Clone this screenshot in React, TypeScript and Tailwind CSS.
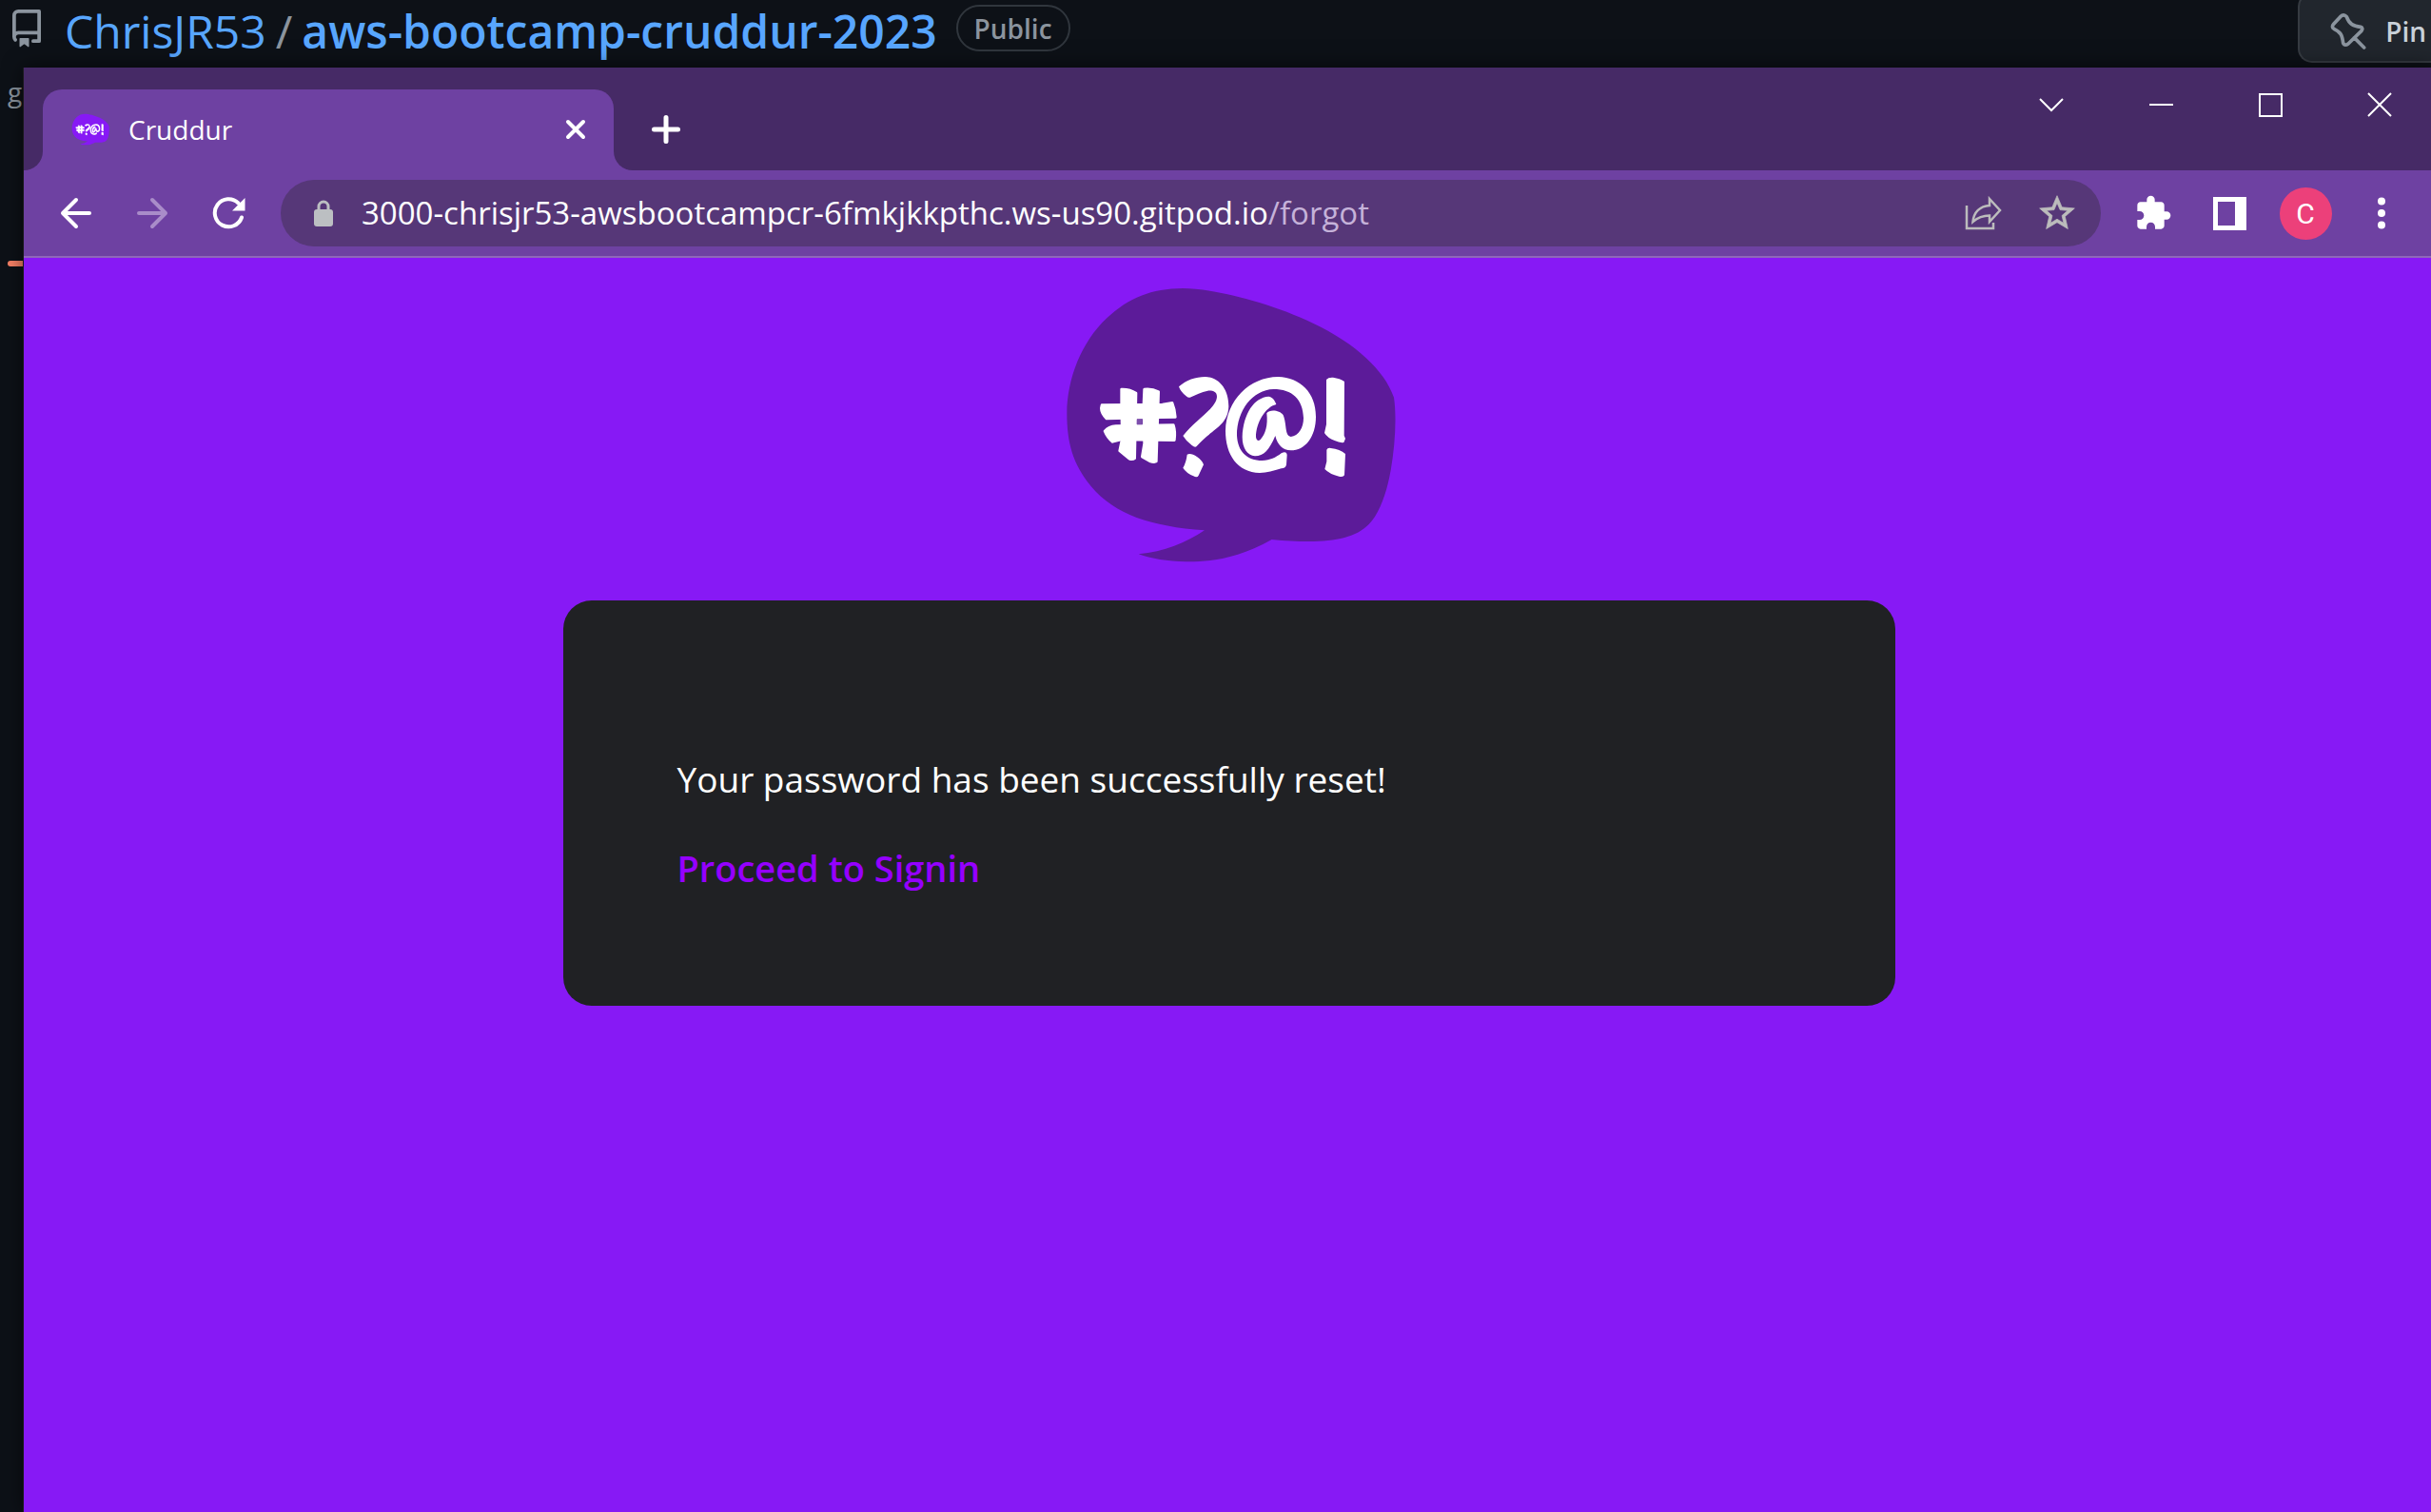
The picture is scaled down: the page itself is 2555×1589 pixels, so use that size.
import { MdExtension } from "react-icons/md";

const HOST = "3000-chrisjr53-awsbootcampcr-6fmkjkkpthc.ws-us90.gitpod.io";

function CruddurMark({ className, bubble, eye }: { className: string; bubble: string; eye: string }) {
  return (
    <svg className={className} viewBox="48 60 1056 876" role="img" aria-label="Cruddur">
      <path
        fill={bubble}
        d="M430 66C520 66 700 108 840 176C975 240 1066 325 1095 410C1104 470 1099 560 1085 640C1072 712 1050 775 1016 810C962 865 860 872 710 858C600 920 510 929 440 928C380 927 330 918 290 904C370 897 440 868 498 829C330 817 215 780 140 690C84 622 64 555 64 460C65 350 110 235 190 160C260 95 330 67 430 66Z"
      />
      <g fill="#fff" stroke="#fff" strokeWidth="8" strokeLinejoin="round">
        <path d="M236 384Q262 383 282 396L278 602Q270 608 260 603L230 578L238 540L236 430Z" />
        <path d="M308 384Q332 381 353 392L346 612Q340 616 325 611L301 597L308 555L306 430Z" />
        <path d="M174 434L365 432L396 427Q404 446 406 472L350 473L189 477Q172 460 172 444Z" />
        <path d="M183 516Q196 501 218 500L400 497Q407 518 403 545L235 543L208 550Q192 538 183 516Z" />
      </g>
      <path fill={eye} d="M285 478h17v18h-17Z" />
      <g fill="#fff">
        <path d="M417 376C440 355 470 345 500 345C545 347 574 385 574 438C572 500 520 510 473 564Q468 569 458 561Q440 548 430 531C470 480 535 445 537 408C537 392 525 388 508 389C488 392 470 402 452 410Q447 412 440 406Q422 392 417 376Z" />
        <path d="M443 590Q455 584 475 598Q490 608 495 622L479 656Q475 664 463 658Q440 648 430 632Q440 615 443 590Z" />
        <path d="M740 586Q757 578 758 592L756 622Q754 634 740 634C715 642 695 648 672 648C600 645 564 590 564 515C566 420 640 345 730 345C800 347 849 395 849 470C849 535 815 577 770 577C745 576 728 560 721 531C702 575 685 595 657 595C633 593 617 570 617 535C620 460 655 410 700 407C712 408 720 420 724 432C690 440 660 490 660 535C662 547 668 548 674 543C690 525 698 500 694 460C703 447 735 450 746 466C758 495 750 530 770 534C795 532 810 505 810 475C808 415 775 384 715 384C650 386 600 450 600 530C603 580 630 608 680 609C705 608 722 600 740 586Z" />
        <path d="M882 354Q888 346 903 347Q925 350 939 360L938 530L942 540L937 552Q925 554 908 546Q885 537 876 522L882 495Z" />
        <path d="M883 575Q886 568 896 570Q925 573 942 588L939 655Q936 662 922 659Q892 652 877 636L883 612Z" />
      </g>
    </svg>
  );
}

function RepoIcon() {
  return (
    <svg className="mt-[10px] size-10 shrink-0" viewBox="0 0 16 16" fill="currentColor" aria-hidden="true">
      <path d="M2 2.5A2.5 2.5 0 0 1 4.5 0h8.75a.75.75 0 0 1 .75.75v12.500a.75.75 0 0 1-.75.75h-2.500a.75.75 0 0 1 0-1.500h1.750v-2h-8a1 1 0 0 0-.714 1.700.75.75 0 1 1-1.072 1.050A2.495 2.495 0 0 1 2 11.500Zm10.500-1h-8a1 1 0 0 0-1 1v6.708A2.486 2.486 0 0 1 4.500 9h8ZM5 12.250a.25.25 0 0 1 .25-.25h3.500a.25.25 0 0 1 .25.25v3.250a.25.25 0 0 1-.4.2l-1.450-1.087a.249.249 0 0 0-.3 0L5.400 15.700a.25.25 0 0 1-.4-.2Z" />
    </svg>
  );
}

function PinIcon() {
  return (
    <svg
      className="size-10 text-[#8b949e]"
      viewBox="0 0 120 120"
      fill="none"
      stroke="currentColor"
      strokeWidth="11"
      strokeLinecap="round"
      strokeLinejoin="round"
      aria-hidden="true"
    >
      <path d="M38 14Q49 3 58 14C66 38 80 43 102 46Q111 49 105 58L63 99Q52 107 47 97C44 72 40 62 18 52Q9 46 17 37ZM82 80L113 111" />
    </svg>
  );
}

function RepositoryHeader() {
  return (
    <header className="flex h-[71px] items-start overflow-hidden bg-[#0d1117] pl-2 text-[#8b949e]">
      <RepoIcon />
      <h1 className="ml-5 flex text-[48px] leading-[66px] whitespace-nowrap text-[#58a6ff]">
        <a href="#owner">ChrisJR53</a>
        <span className="mx-[10px] text-[#8b949e]">/</span>
        <a href="#repository" className="font-semibold">aws-bootcamp-cruddur-2023</a>
      </h1>
      <span className="mt-[5px] ml-5 flex h-[49px] items-center rounded-full border-2 border-[#30363d] px-[17px] text-[28px] font-semibold">
        Public
      </span>
      <button className="-mt-2 ml-auto flex h-[74px] shrink-0 items-center gap-5 rounded-[15px] rounded-r-none border-2 border-r-0 border-[#363b42] bg-[#21262d] pt-2 pr-[5px] pl-[30px] text-[28px] font-semibold text-[#c9d1d9]">
        <PinIcon />
        Pin
      </button>
    </header>
  );
}

function TabStrip() {
  return (
    <div className="flex h-[108px] items-end bg-[#462a66]">
      <div className="size-5 bg-[#6e41a2]">
        <div className="size-5 rounded-br-[20px] bg-[#462a66]" />
      </div>
      <div className="flex h-[85px] w-[600px] items-center rounded-t-[20px] bg-[#6e41a2] pr-7 pb-[2px] pl-[30px]">
        <CruddurMark className="h-9 w-10" bubble="#8719f5" eye="#8719f5" />
        <span className="ml-5 text-[28px] text-white">Cruddur</span>
        <button aria-label="Close tab" className="ml-auto">
          <svg className="size-6" viewBox="0 0 24 24" stroke="#fff" strokeWidth="4" strokeLinecap="round">
            <path d="M4 4L20 20M20 4L4 20" />
          </svg>
        </button>
      </div>
      <div className="size-5 bg-[#6e41a2]">
        <div className="size-5 rounded-bl-[20px] bg-[#462a66]" />
      </div>
      <button aria-label="New tab" className="mb-7 ml-5">
        <svg className="size-[30px]" viewBox="0 0 30 30" stroke="#fff" strokeWidth="5" strokeLinecap="round">
          <path d="M15 2.5V27.5M2.5 15H27.5" />
        </svg>
      </button>
      <div className="ml-auto flex self-start">
        {[
          ["Search tabs", "M1 7L13 19L25 7"],
          ["Minimize", "M1 13H26"],
          ["Maximize", "M2 2H25V25H2Z"],
          ["Close", "M1 1L25 25M25 1L1 25"],
        ].map(([label, d]) => (
          <button key={label} aria-label={label} className="flex h-[78px] w-[115px] items-center justify-center">
            <svg className="size-[26px]" viewBox="0 0 26 26" fill="none" stroke="#fff" strokeWidth="2">
              <path d={d} />
            </svg>
          </button>
        ))}
      </div>
    </div>
  );
}

function Toolbar() {
  const cell = "flex h-[70px] w-20 items-center justify-center";
  return (
    <div className="flex h-[92px] items-center border-b-2 border-[#8f67b9] bg-[#6e41a2] pr-[15px] pl-[15px] text-white">
      <button aria-label="Back" className={cell}>
        <svg className="size-10" viewBox="0 0 40 40" fill="none" stroke="#fff" strokeWidth="4" strokeLinecap="round" strokeLinejoin="round">
          <path d="M34 20H6M20 6L6 20L20 34" />
        </svg>
      </button>
      <button aria-label="Forward" className={cell}>
        <svg className="size-10" viewBox="0 0 40 40" fill="none" stroke="#a98cc9" strokeWidth="4" strokeLinecap="round" strokeLinejoin="round">
          <path d="M6 20H34M20 6L34 20L20 34" />
        </svg>
      </button>
      <button aria-label="Reload" className={cell}>
        <svg className="size-10" viewBox="0 0 40 40" fill="none">
          <path d="M34 24.500A14.500 14.500 0 1 1 30.500 9.500" stroke="#fff" strokeWidth="4" strokeLinecap="round" />
          <path d="M37.500 4V17.500H24Z" fill="#fff" />
        </svg>
      </button>
      <div className="mx-[15px] flex h-[70px] min-w-0 flex-1 items-center rounded-full bg-[#563778] pr-6 pl-[35px]">
        <svg className="h-7 w-5 shrink-0" viewBox="0 0 20 28" fill="none">
          <path d="M5 11V7A5 5 0 0 1 15 7V11" stroke="#bcbfc2" strokeWidth="3" />
          <rect y="10" width="20" height="18" rx="3" fill="#bcbfc2" />
        </svg>
        <label className="ml-[30px] flex min-w-0 items-center text-[33px]">
          <input aria-label="Address" defaultValue={HOST} className="field-sizing-content min-w-0 bg-transparent outline-none" />
          <span className="text-[#c5b2d9]">/forgot</span>
        </label>
        <button aria-label="Share this page" className="ml-auto">
          <svg className="size-10" viewBox="0 0 40 40" fill="none" stroke="#bcbcbc" strokeWidth="2.500">
            <path d="M3 12V36H31V30" />
            <path d="M27 5L38 17L27 29V22.500C19 22.500 13 26 9.500 29C10.500 19 17 12.500 27 12Z" />
          </svg>
        </button>
        <button aria-label="Bookmark this page" className="ml-9">
          <svg className="size-11" viewBox="0 0 24 24" fill="#bcbcbc" stroke="#bcbcbc" strokeWidth="0.4">
            <path d="M22 9.24l-7.19-.62L12 2 9.19 8.63 2 9.24l5.46 4.73L5.82 21 12 17.27 18.18 21l-1.63-7.03L22 9.24zM12 15.4l-3.76 2.27 1-4.28-3.32-2.88 4.38-.38L12 6.1l1.71 4.04 4.38.38-3.32 2.88 1 4.28L12 15.4z" />
          </svg>
        </button>
      </div>
      <button aria-label="Extensions" className={cell}>
        <MdExtension className="size-10" />
      </button>
      <button aria-label="Side panel" className={cell}>
        <svg className="size-[35px]" viewBox="0 0 35 35">
          <path fill="#fff" fillRule="evenodd" d="M0 0H35V35H0ZM5 5V30H23V5Z" />
        </svg>
      </button>
      <button aria-label="Profile" className={cell}>
        <span className="flex size-[55px] items-center justify-center rounded-full bg-[#ec407a] font-[Roboto] text-[30px]">C</span>
      </button>
      <button aria-label="Menu" className={cell}>
        <svg className="size-10" viewBox="0 0 40 40" fill="#fff">
          <circle cx="20" cy="7.500" r="4" />
          <circle cx="20" cy="20" r="4" />
          <circle cx="20" cy="32.500" r="4" />
        </svg>
      </button>
    </div>
  );
}

function ConfirmationPage() {
  return (
    <main className="flex flex-1 flex-col items-center bg-[#8719f5] pt-[30px]">
      <CruddurMark className="h-[292px] w-[352px]" bubble="#5c1b99" eye="#7d4fad" />
      <section className="mt-[38px] w-full max-w-[1400px] rounded-[30px] bg-[#202124] px-[120px] pt-[161px] pb-[118px] leading-[54px]">
        <p className="text-[37px] text-white">Your password has been successfully reset!</p>
        <a href="#signin" className="mt-[39px] block w-fit text-[38px] font-semibold text-[#9500ff]">
          Proceed to Signin
        </a>
      </section>
    </main>
  );
}

export default function App() {
  return (
    <div className="flex min-h-screen flex-col overflow-hidden bg-[#0d1117] font-['Open_Sans','Noto_Sans',sans-serif]">
      <RepositoryHeader />
      <div className="flex flex-1">
        <aside className="w-[25px] shrink-0 overflow-hidden border-r border-[#222326] pl-2 text-[28px] text-[#8b949e]">
          <p className="h-[203px] leading-[50px]">g</p>
          <div className="h-[6px] rounded-l-full bg-[#f78166]" />
        </aside>
        <div className="-mr-[3px] flex min-w-0 flex-1 flex-col shadow-[0_0_20px_rgba(0,0,0,0.6)]">
          <TabStrip />
          <Toolbar />
          <ConfirmationPage />
        </div>
      </div>
    </div>
  );
}
